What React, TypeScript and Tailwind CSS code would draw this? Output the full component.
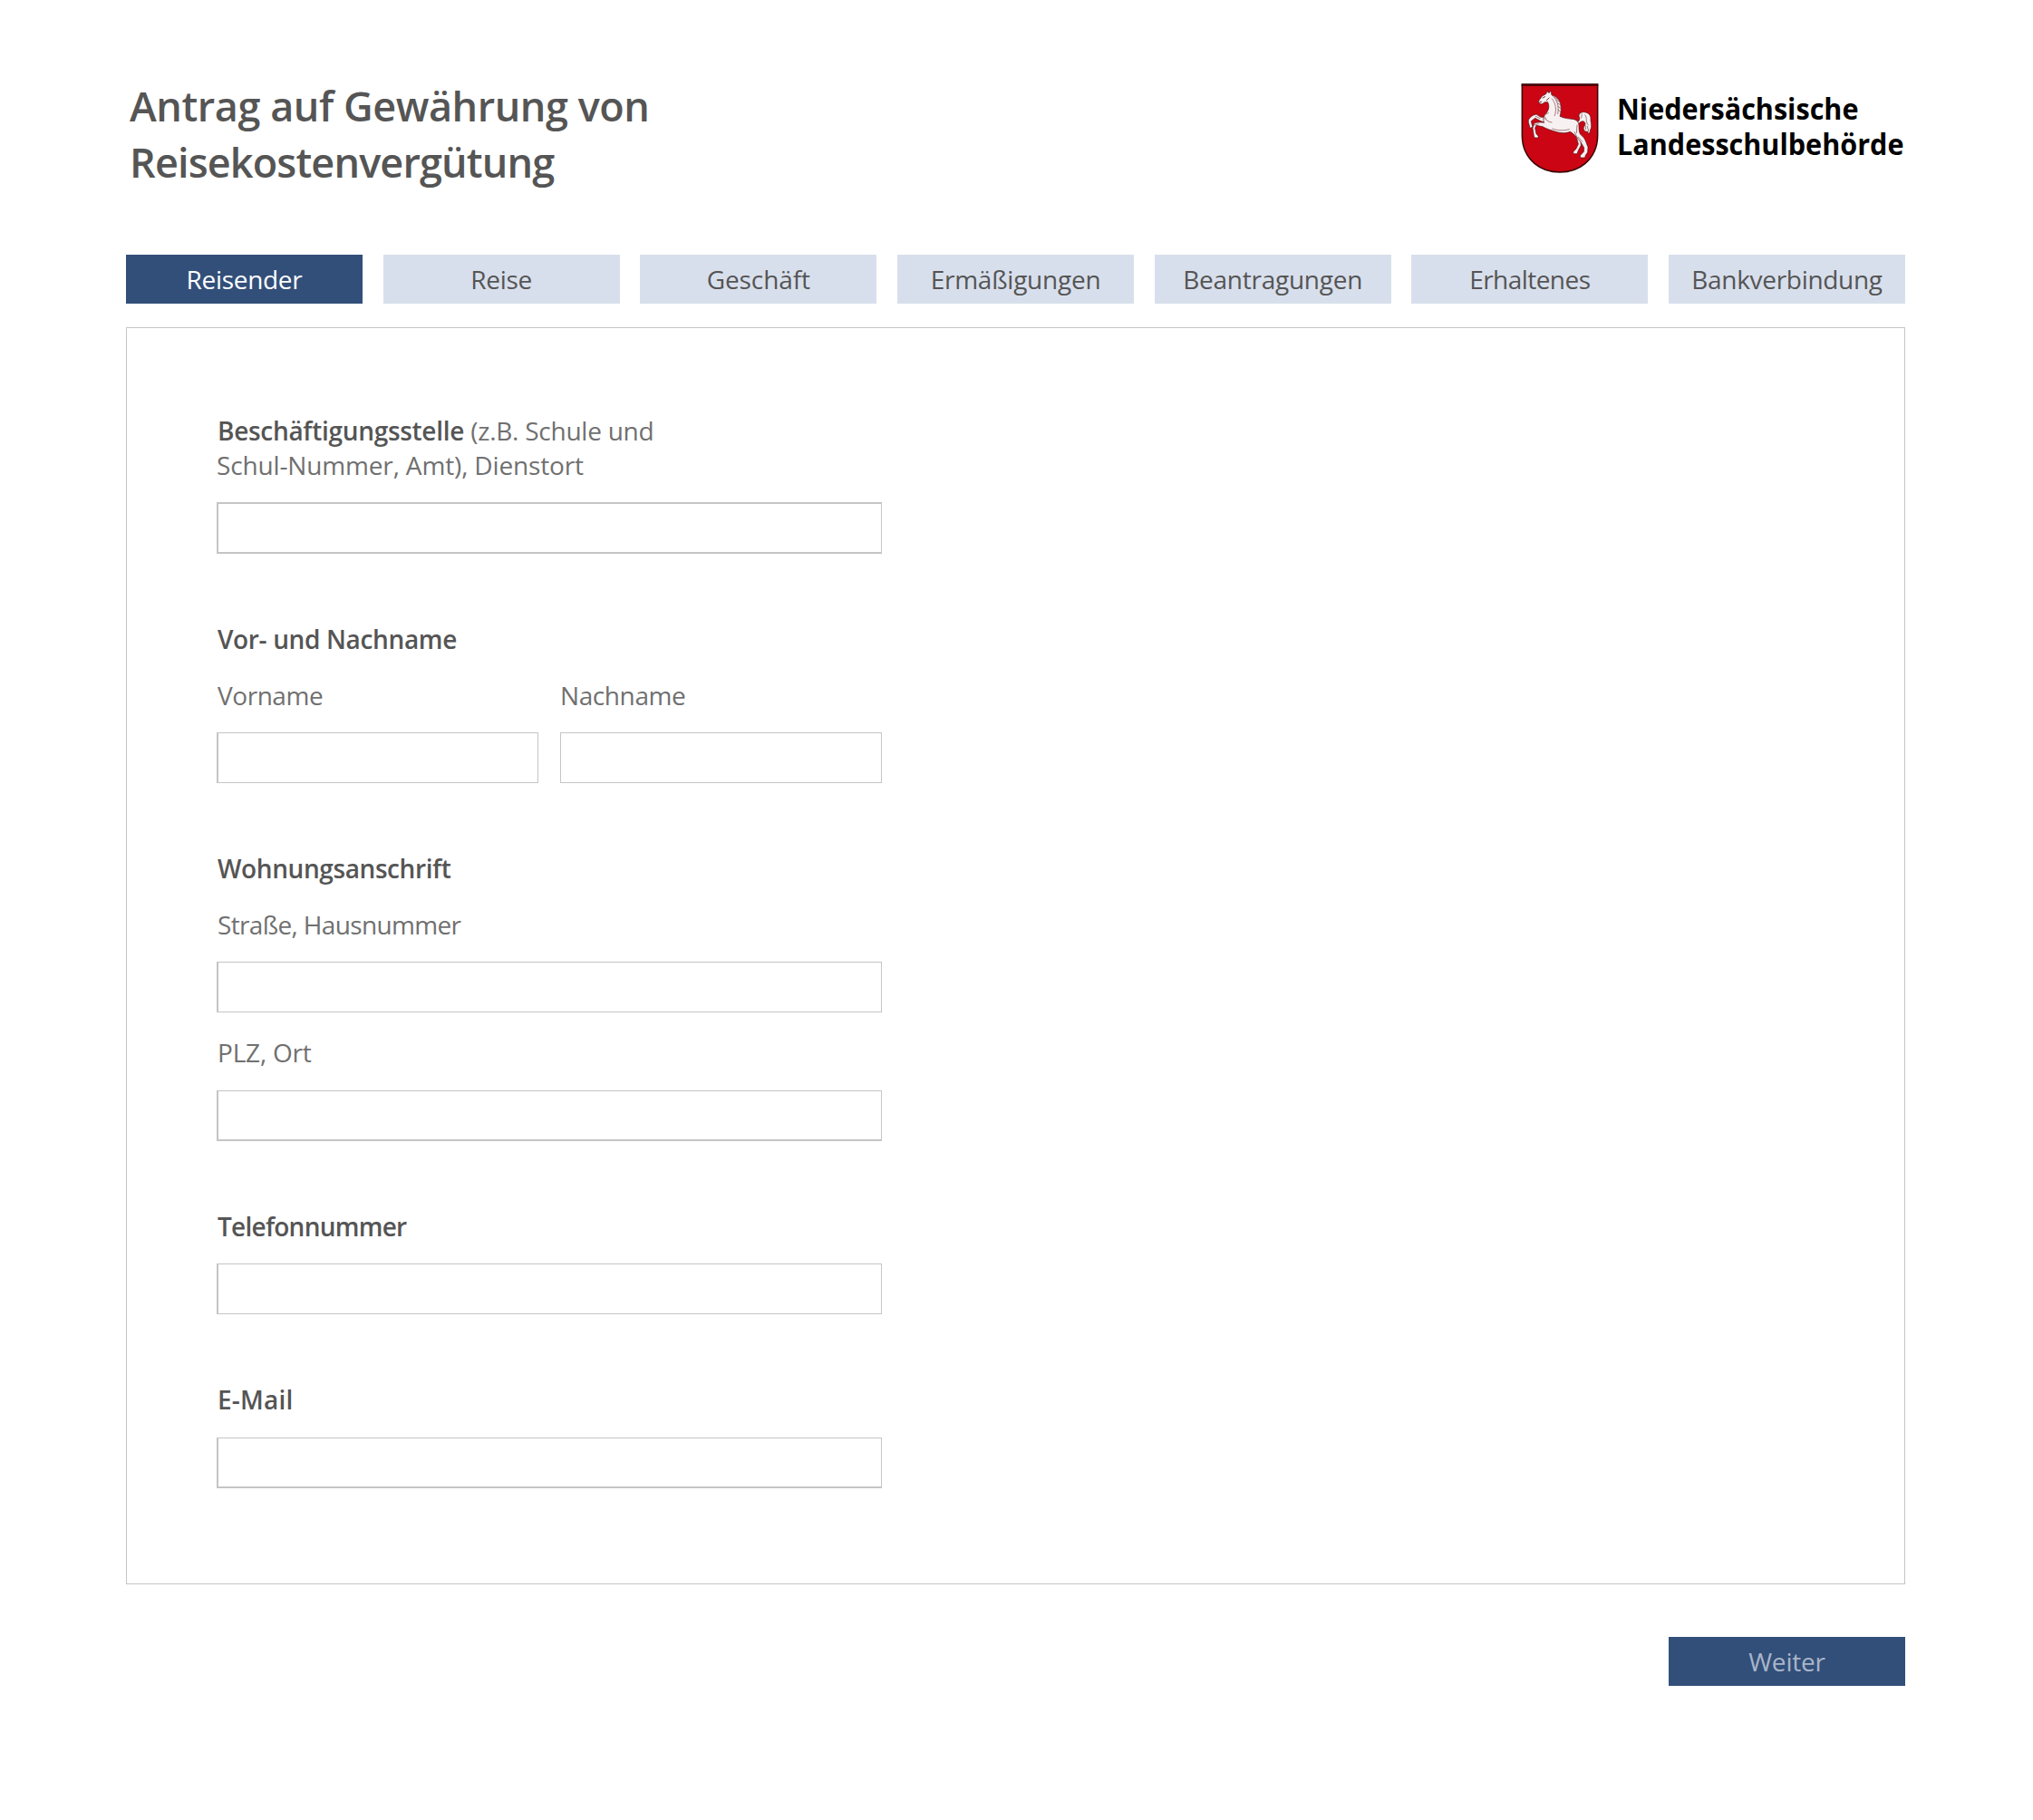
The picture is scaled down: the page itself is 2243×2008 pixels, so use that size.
const tabs = [
  { label: "Reisender", tracking: "tracking-[-0.3px]" },
  { label: "Reise", tracking: "tracking-[-0.3px]" },
  { label: "Geschäft", tracking: "tracking-[-0.1px]" },
  { label: "Ermäßigungen", tracking: "tracking-[-0.25px]" },
  { label: "Beantragungen", tracking: "tracking-[-0.25px]" },
  { label: "Erhaltenes", tracking: "tracking-[-0.55px]" },
  { label: "Bankverbindung", tracking: "tracking-[-0.3px]" },
];

function Crest() {
  return (
    <svg className="h-[99px] w-[86px] shrink-0" viewBox="54 36 258 297" aria-hidden="true">
      <path
        d="M58 39H308V208C308 247 292 280 266 302C242 322 213 330 183 330C153 330 124 322 100 302C74 280 58 247 58 208Z"
        fill="#cb0513"
        stroke="#350507"
        strokeWidth="4.5"
      />
      <path d="M56 41.500H310" stroke="#4a0508" strokeWidth="7" />
      <g fill="#f8f1f1" stroke="#4d1219" strokeWidth="2" strokeLinejoin="round">
        {/* tail */}
        <path d="M240 166C248 160 250 154 247 147C243 138 252 130 263 131C276 132 286 140 285 153C284 161 288 168 287 178C288 186 282 188 283 196L278 205L275 195C267 198 259 189 262 180C268 174 269 166 262 162C254 160 249 165 243 172Z" />
        {/* far front leg */}
        <path d="M148 158C138 148 128 147 120 148L106 139C97 138 88 145 81 154C77 159 79 166 81 172L84 184L93 181L90 170L88 161L101 151L118 160L140 169Z" />
        {/* far hind leg */}
        <path d="M226 192L239 218L244 237L237 252L227 263L228 269L240 269L244 258L253 241L251 219L242 196Z" />
        {/* body, neck and head */}
        <path d="M153 60L156 75C171 79 182 89 185 104C188 119 187 132 183 145C197 152 214 153 230 155C240 158 246 164 246 176C246 190 247 198 251 205C260 212 266 219 269 229L276 247L275 264L268 274L266 282L251 282L250 275L262 262L263 249L253 232L237 212C230 205 224 200 217 196C200 203 180 200 160 193C146 189 135 184 126 179L105 175L101 184L105 203L112 211L109 217L98 215L96 204L93 184L98 169C104 164 116 164 131 166C127 157 127 149 133 141C142 130 148 121 146 107L143 98L133 98L123 105L114 101L113 94L124 78L137 71L141 62L147 68Z" />
      </g>
      <g fill="none" stroke="#8f6468" strokeWidth="2.500" strokeLinecap="round">
        <path d="M160 78C174 91 181 112 176 137" />
        <path d="M157 87C169 101 173 122 166 143" />
        <path d="M165 82L176 89M171 91L183 98M175 101L186 108M177 112L187 120M177 123L186 131" />
        <path d="M134 147C136 158 145 164 156 165" />
        <path d="M134 139L145 134M130 150L136 156M158 186C176 193 196 193 214 188" />
        <path d="M240 174L238 200M244 214L257 229M231 197L242 218" />
        <path d="M266 140C276 150 265 160 277 174M274 178L278 194M256 138L254 150M267 175L269 188" />
        <path d="M126 84L134 80M139 92L147 84M117 98L122 97" stroke="#4d1219" />
        <path d="M103 145L117 152M98 174L112 170" />
      </g>
    </svg>
  );
}

const strong = "block text-[28px] leading-[38px] font-semibold text-[#555555] whitespace-nowrap";
const light = "block text-[28px] leading-[38px] text-[#707070] whitespace-nowrap";
const field = "block w-full bg-white border border-[#c5c5c5] outline-none px-3 text-[28px] text-[#555555]";

export default function App() {
  return (
    <div className="min-h-[2008px] w-[2243px] bg-white pl-[139px] font-['Open_Sans','Noto_Sans',sans-serif]">
      <div className="w-[1963px]">
        <header className="flex h-[281px] items-start justify-between">
          <h1 className="mt-[86px] ml-[4px] text-[45px] leading-[62px] font-semibold whitespace-nowrap text-[#555555]">
            <span className="block tracking-[-0.45px]">Antrag auf Gewährung von</span>
            <span className="block tracking-[-0.85px]">Reisekostenvergütung</span>
          </h1>
          <div className="mt-[92px] flex w-[424px] items-start">
            <Crest />
            <p className="mt-[9px] ml-[20px] origin-left scale-x-[0.926] text-[33px] leading-[38.500px] font-bold whitespace-nowrap text-black">
              Niedersächsische
              <br />
              Landesschulbehörde
            </p>
          </div>
        </header>

        <nav className="grid h-[54px] grid-cols-7 gap-x-[22.680px]">
          {tabs.map((tab, i) => (
            <button
              key={tab.label}
              className={`${tab.tracking} text-center text-[28px] leading-[54px] whitespace-nowrap ${
                i === 0 ? "bg-[#324f7a] text-white" : "bg-[#d8dfec] text-[#555555]"
              }`}
            >
              {tab.label}
            </button>
          ))}
        </nav>

        <main className="mt-[26px] h-[1387px] border border-[#c5c5c5] pt-[94px] pl-[99px]">
          <form className="flex w-[734px] flex-col gap-[75px]">
            <section>
              <label className={light}>
                <span className="ml-px font-semibold tracking-[-0.3px] text-[#555555]">Beschäftigungsstelle</span>{" "}
                <span className="tracking-[-0.25px]">(z.B. Schule und</span>
                <br />
                <span className="tracking-[-0.15px]">Schul-Nummer, Amt), Dienstort</span>
              </label>
              <input className={`${field} mt-[22px] h-[57px] border-y-2 border-l-2`} />
            </section>

            <section>
              <h2 className={`${strong} pl-px tracking-[-0.35px]`}>Vor- und Nachname</h2>
              <div className="mt-[24px] grid grid-cols-2 gap-x-[24px]">
                <label className={`${light} tracking-[-0.45px]`}>
                  <span className="ml-px">Vorname</span>
                  <input className={`${field} mt-[22px] h-[56px] border-l-2`} />
                </label>
                <label className={`${light} tracking-[-0.4px]`}>
                  Nachname
                  <input className={`${field} mt-[22px] h-[56px]`} />
                </label>
              </div>
            </section>

            <section>
              <h2 className={`${strong} pl-px tracking-[-0.4px]`}>Wohnungsanschrift</h2>
              <label className={`${light} mt-[24px] tracking-[-0.65px]`}>
                <span className="ml-px">Straße, Hausnummer</span>
                <input className={`${field} mt-[22px] h-[56px] border-l-2`} />
              </label>
              <label className={`${light} mt-[25px] tracking-[-0.2px]`}>
                <span className="ml-px">PLZ, Ort</span>
                <input className={`${field} mt-[23px] h-[56px] border-b-2 border-l-2`} />
              </label>
            </section>

            <section>
              <label className={`${strong} tracking-[-0.75px]`}>
                <span className="ml-px">Telefonnummer</span>
                <input className={`${field} mt-[22px] h-[56px] border-l-2`} />
              </label>
            </section>

            <section>
              <label className={`${strong} tracking-[0.2px]`}>
                <span className="ml-px">E-Mail</span>
                <input className={`${field} mt-[23px] h-[56px] border-b-2 border-l-2`} />
              </label>
            </section>
          </form>
        </main>

        <div className="mt-[58px] flex justify-end">
          <button className="h-[54px] w-[261px] bg-[#324f7a] text-center text-[28px] leading-[54px] tracking-[-0.2px] text-[#a9b5c8]">
            Weiter
          </button>
        </div>
      </div>
    </div>
  );
}
